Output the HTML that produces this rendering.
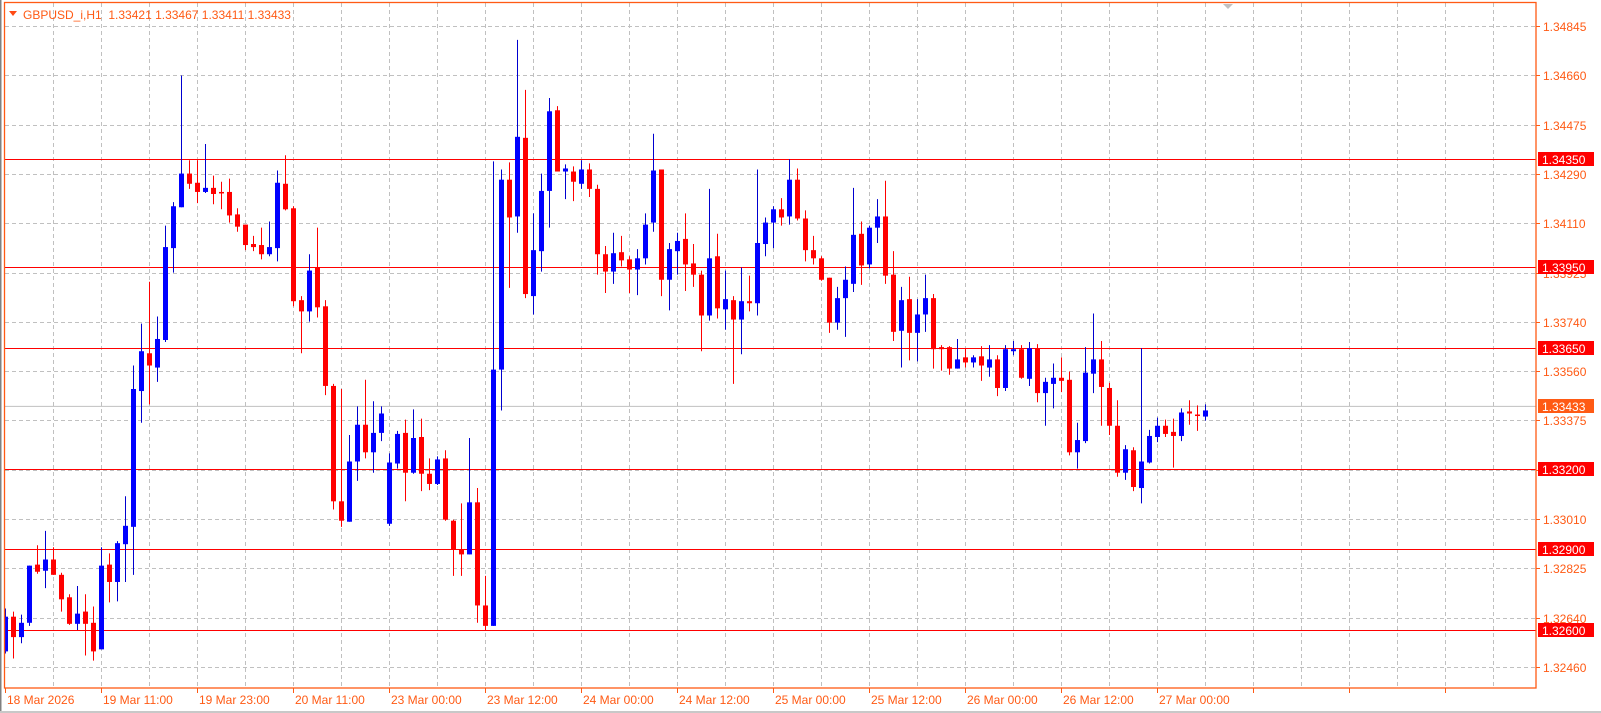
<!DOCTYPE html>
<html><head><meta charset="utf-8">
<style>
html,body{margin:0;padding:0;background:#fff;width:1601px;height:713px;overflow:hidden}
svg{display:block}
text{font-family:"Liberation Sans",sans-serif;font-size:12px}
</style></head>
<body>
<svg id="s" width="1601" height="713" xmlns="http://www.w3.org/2000/svg">
<rect x="0" y="0" width="1601" height="713" fill="#fff"/>
<line x1="0.5" y1="0" x2="0.5" y2="713" stroke="#808080" stroke-width="2"/>
<line x1="0" y1="712" x2="1601" y2="712" stroke="#c8c8c8" stroke-width="2"/>
<g id="grid" stroke="#c0c0c0" stroke-width="1" stroke-dasharray="4,3"></g>
<g id="lvl"></g>
<g id="cand"></g>
<rect x="4.5" y="2.5" width="1531.5" height="685.5" fill="none" stroke="#ff5a14" stroke-width="1.3"/>
<g id="axis"></g>
<polygon points="1223,4 1233,4 1228,9" fill="#c0c0c0"/>
<polygon points="9,11 17,11 13,16" fill="#ff4a14"/>
<text x="23" y="19" fill="#ff5a14" xml:space="preserve" style="white-space:pre">GBPUSD_i,H1  1.33421 1.33467 1.33411 1.33433</text>
</svg>
<script>
var NS="http://www.w3.org/2000/svg",s=document.getElementById('s');
function el(p,t,a,txt){var e=document.createElementNS(NS,t);for(var k in a)e.setAttribute(k,a[k]);if(txt!=null)e.textContent=txt;document.getElementById(p).appendChild(e);return e;}
for(var k=0;k<14;k++){var y=Math.round(26+49.3*k)+0.5;el('grid','line',{x1:5,y1:y,x2:1536,y2:y});}
for(var x=53;x<1536;x+=48){el('grid','line',{x1:x+0.5,y1:3,x2:x+0.5,y2:688});}
function PY(p){return 26+(1.34845-p)*26906;}
el('lvl','line',{x1:5,y1:PY(1.33433)+0.5,x2:1536,y2:PY(1.33433)+0.5,stroke:'#c0c0c0','stroke-width':1});
var lv=[1.34350,1.33950,1.33650,1.33200,1.32900,1.32600];
lv.forEach(function(p){var y=Math.round(PY(p))+0.5;el('lvl','line',{x1:5,y1:y,x2:1536,y2:y,stroke:'#ff0000','stroke-width':1});});
var labs=["1.34845","1.34660","1.34475","1.34290","1.34110","1.33925","1.33740","1.33560","1.33375","1.33190","1.33010","1.32825","1.32640","1.32460"];
labs.forEach(function(t,k){var y=Math.round(26+49.3*k);el('axis','line',{x1:1536,y1:y+0.5,x2:1540,y2:y+0.5,stroke:'#ff5a14'});el('axis','text',{x:1543,y:y+5,fill:'#ff5a14'},t);});
lv.forEach(function(p){var y=Math.round(PY(p));el('axis','rect',{x:1538,y:y-7,width:56,height:14,fill:'#ff0000'});el('axis','text',{x:1542,y:y+5,fill:'#fff'},p.toFixed(5));});
var cy=Math.round(PY(1.33433));el('axis','rect',{x:1538,y:cy-7,width:56,height:14,fill:'#ff5a14'});el('axis','text',{x:1542,y:cy+5,fill:'#fff'},"1.33433");
var dl=["18 Mar 2026","19 Mar 11:00","19 Mar 23:00","20 Mar 11:00","23 Mar 00:00","23 Mar 12:00","24 Mar 00:00","24 Mar 12:00","25 Mar 00:00","25 Mar 12:00","26 Mar 00:00","26 Mar 12:00","27 Mar 00:00"];
dl.forEach(function(t,k){var x=5+96*k;el('axis','line',{x1:x+0.5,y1:688,x2:x+0.5,y2:693,stroke:'#ff5a14'});el('axis','text',{x:x+2,y:704,fill:'#ff5a14'},t);});
for(var x=5+96*13;x<1536;x+=96){el('axis','line',{x1:x+0.5,y1:688,x2:x+0.5,y2:693,stroke:'#ff5a14'});}
var D=[
"b 604 638 596 640","r 604 624 599 645","b 610 624 602 630","b 554 610 554 613","r 553 560 534 562","b 548 559 520 576","r 548 563 536 563","r 563 587 561 599","r 585 611 582 612","b 601 611 574 617",
"r 599 611 582 642","r 610 638 594 647","b 554 636 536 636","r 553 570 542 590","b 532 570 530 589","b 515 533 486 570","b 381 516 358 563","b 344 383 317 414","r 346 358 276 396","b 332 360 310 374",
"b 242 333 221 335","b 202 243 198 267","b 170 203 74 203","r 170 180 157 185","r 179 188 157 199","b 184 188 141 189","r 184 190 172 200","r 188 189 178 205","r 188 211 175 218","r 210 222 204 227",
"r 220 240 220 245","r 239 242 231 246","r 240 249 223 254","b 242 249 217 251","b 179 243 167 256","r 180 205 152 206","r 204 295 202 300","r 294 305 290 346","b 265 305 249 315","r 262 301 223 311",
"r 300 378 294 387","r 378 491 376 499","r 491 510 381 516","b 452 511 426 511","b 416 452 398 471","r 416 443 372 449","b 424 443 393 463","b 405 424 398 432","b 453 513 444 515","b 425 454 422 459",
"r 424 463 411 491","b 429 463 401 464","r 428 464 410 481","r 464 474 449 480","b 450 474 447 475","r 449 509 441 510","r 510 538 509 564","r 538 543 493 564","b 492 543 429 543","r 492 593 478 610",
"r 593 613 564 617","b 362 613 158 613","b 176 362 166 402","r 176 213 159 282","b 134 212 39 228","r 135 288 88 292","b 245 290 209 308","b 187 246 170 266","b 109 187 96 223","r 108 168 104 168",
"b 165 168 161 195","r 168 178 163 197","b 166 180 157 185","r 166 185 160 193","r 185 249 181 269","r 249 266 241 287","b 248 266 228 278","r 247 255 231 261","r 254 264 251 287","b 253 264 244 289",
"b 220 253 209 259","b 167 218 131 227","r 166 274 166 290","b 244 274 238 304","b 236 246 228 269","r 234 259 209 285","r 258 269 239 281","r 269 309 265 344","b 253 309 185 314","r 251 302 229 312",
"b 293 303 265 323","r 294 313 290 376","b 295 313 262 347","r 295 297 270 305","b 238 297 166 309","b 218 239 213 251","b 205 218 202 243","r 205 213 194 221","b 176 212 156 220","r 176 214 165 216",
"r 214 245 206 256","r 245 253 231 259","r 253 274 251 275","r 272 316 272 326","b 292 316 281 323","b 274 292 261 330","b 230 278 184 286","r 229 260 217 279","b 223 259 221 263","b 212 223 195 238",
"r 212 270 177 278","r 269 325 246 334","b 294 324 281 360","r 293 326 271 353","b 308 326 293 354","b 292 308 269 325","r 292 342 288 361","r 340 342 338 363","r 340 361 339 367","b 352 361 332 361",
"r 350 355 341 360","b 350 355 348 360","r 349 358 339 373","b 352 360 338 369","r 352 380 348 388","b 342 380 338 383","b 342 344 334 348","r 342 370 338 371","b 341 371 335 378","r 341 385 337 394",
"b 374 385 370 417","b 370 376 356 400","r 370 373 350 384","r 372 443 364 446","b 431 443 414 459","b 365 432 340 434","b 352 366 307 385","r 352 379 334 417","r 380 417 375 426","r 417 463 392 467",
"b 440 463 436 470","r 441 477 438 481","b 452 478 341 493","b 427 453 421 454","b 417 428 409 433","r 417 425 411 428","r 423 427 410 458","b 404 427 400 432","r 403 405 392 416","r 406 407 397 422",
"b 402 408 396 412"];
var F=1.021;
D.forEach(function(d,i){var a=d.split(' '),c=a[0]=='b'?'#0000ff':'#ff0000',wc=a[0]=='b'?'#0000d0':'#ff0000';
var bt=+a[1]*F,bb=+a[2]*F,wt=+a[3]*F,wb=+a[4]*F,x=5+8*i;
var x1=Math.max(x-2,5);
el('cand','line',{x1:x+0.5,y1:wt,x2:x+0.5,y2:wb,stroke:wc,'stroke-width':1});
el('cand','rect',{x:x1,y:bt,width:(x+3)-x1,height:Math.max(bb-bt,1.5),fill:c});});
</script>
</body></html>
